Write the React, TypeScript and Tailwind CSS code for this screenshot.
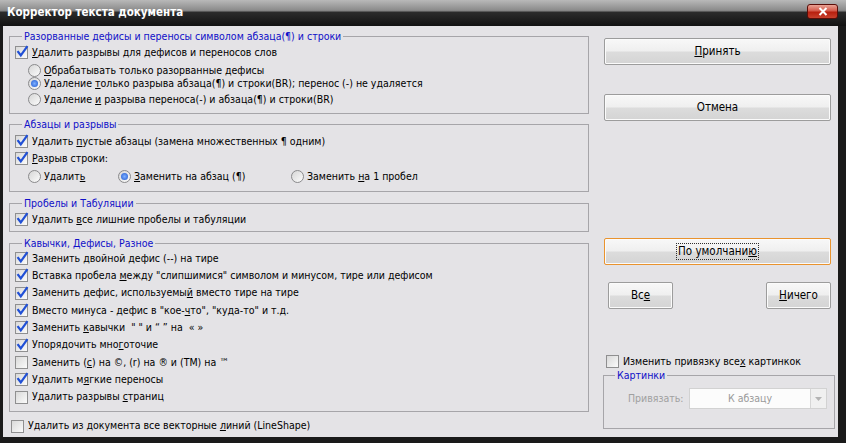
import React from 'react';

function Check({ on }: { on?: boolean }) {
  return (
    <span className="relative block w-[13px] h-[13px] shrink-0 border border-[#8f8f90] bg-linear-to-br from-[#d9d9d9] to-[#fbfbfb]">
      {on && (
        <svg className="absolute left-[0px] top-[-2px]" width="13" height="13" viewBox="0 0 13 13">
          <path d="M2.2 7 L4.8 10.4 L10.8 2" stroke="#2150d6" strokeWidth="2.2" fill="none" strokeLinecap="square" />
        </svg>
      )}
    </span>
  );
}

function Radio({ on }: { on?: boolean }) {
  return (
    <span className="relative flex items-center justify-center w-[13px] h-[13px] shrink-0 rounded-full border border-[#8a8a8c] bg-linear-to-br from-[#d6d6d6] to-[#fcfcfc]">
      {on && <span className="block w-[7px] h-[7px] rounded-full bg-radial from-[#7fb0ff] to-[#1d55cf]" />}
    </span>
  );
}

function CheckRow({ on, children, h = 'h-[17px]' }: { on?: boolean; children: React.ReactNode; h?: string }) {
  return (
    <div className={`flex items-center ${h}`}>
      <Check on={on} />
      <span className="ml-[4px] whitespace-nowrap">{children}</span>
    </div>
  );
}

function RadioRow({ on, children }: { on?: boolean; children: React.ReactNode }) {
  return (
    <div className="flex items-center">
      <Radio on={on} />
      <span className="ml-[3px] whitespace-nowrap">{children}</span>
    </div>
  );
}

function Legend({ children }: { children: React.ReactNode }) {
  return <legend className="ml-[7px] px-[2px] leading-[14px] text-[#1010c8]">{children}</legend>;
}

const btn =
  'flex items-center justify-center h-[27px] rounded-[2px] border border-[#9c9c9c] bg-[linear-gradient(#f8f8f8_0%,#efefef_48%,#dcdcdc_52%,#d4d4d4_100%)] shadow-[inset_0_0_0_1px_#fbfbfb] text-[11.5px]';

export default function App() {
  return (
    <div className="w-[846px] h-[443px] bg-[#1a1a1a] flex flex-col overflow-hidden font-['DejaVu_Sans_Condensed','Liberation_Sans',sans-serif] text-[10.5px] text-black">
      {/* title bar */}
      <div className="relative h-[26px] shrink-0 flex items-center pl-[7px] bg-[linear-gradient(#b9b9b9_0%,#8a8a8a_40%,#2b2b2b_48%,#121212_100%)]">
        <span className="text-white font-bold text-[11.5px]">Корректор текста документа</span>
        <div className="absolute left-[807px] top-[4px] w-[31px] h-[15px] rounded-[3px] border border-[#5a0d08] bg-[linear-gradient(#e9a294_0%,#d4594a_45%,#b8200f_55%,#c8402c_100%)] flex items-center justify-center">
          <svg width="10" height="9" viewBox="0 0 10 9">
            <path d="M1.5 1 L8.5 8 M8.5 1 L1.5 8" stroke="white" strokeWidth="2" />
          </svg>
        </div>
      </div>

      {/* client area */}
      <div className="flex-1 ml-[3px] mr-[8px] mb-[6px] bg-[#e4e3e6] flex">
        {/* left column */}
        <div className="ml-[6px] w-[580px] flex flex-col">
          <fieldset className="mt-[3px] border border-[#a6a5a9] pl-[5px] pb-[7px]">
            <Legend>Разорванные дефисы и переносы символом абзаца(¶) и строки</Legend>
            <div className="mt-[3px]">
              <CheckRow on h="h-[13px]">
                <u>У</u>далить разрывы для дефисов и переносов слов
              </CheckRow>
            </div>
            <div className="pl-[13px] flex flex-col">
              <div className="mt-[5px] h-[13px] flex items-center">
                <RadioRow>
                  <u>О</u>брабатывать только разорванные дефисы
                </RadioRow>
              </div>
              <div className="mt-[0px] h-[13px] flex items-center">
                <RadioRow on>
                  Удаление <u>т</u>олько разрыва абзаца(¶) и строки(BR); перенос (-) не удаляется
                </RadioRow>
              </div>
              <div className="mt-[3px] h-[13px] flex items-center">
                <RadioRow>
                  Удаление <u>и</u> разрыва переноса(-) и абзаца(¶) и строки(BR)
                </RadioRow>
              </div>
            </div>
          </fieldset>

          <fieldset className="mt-[3px] border border-[#a6a5a9] pl-[5px] pb-[6px]">
            <Legend>Абзацы и разрывы</Legend>
            <div className="mt-[2px]">
              <CheckRow on>
                Удалить <u>п</u>устые абзацы (замена множественных ¶ одним)
              </CheckRow>
              <CheckRow on>
                <u>Р</u>азрыв строки:
              </CheckRow>
              <div className="mt-[1px] h-[17px] flex items-center pl-[13px]">
                <div className="w-[90px]">
                  <RadioRow>
                    Удалит<u>ь</u>
                  </RadioRow>
                </div>
                <div className="w-[173px]">
                  <RadioRow on>
                    <u>З</u>аменить на абзац (¶)
                  </RadioRow>
                </div>
                <RadioRow>
                  Заменить <u>н</u>а 1 пробел
                </RadioRow>
              </div>
            </div>
          </fieldset>

          <fieldset className="mt-[4px] border border-[#a6a5a9] pl-[5px] pb-[3px]">
            <Legend>Пробелы и Табуляции</Legend>
            <div className="mt-[1px]">
              <CheckRow on h="h-[17px]">
                Удалить <u>в</u>се лишние пробелы и табуляции
              </CheckRow>
            </div>
          </fieldset>

          <fieldset className="mt-[4px] border border-[#a6a5a9] pl-[5px] pb-[5px]">
            <Legend>Кавычки, Дефисы, Разное</Legend>
            <div className="mt-[0px] flex flex-col">
              <CheckRow on h="h-[17.3px]">
                Заменить <u>д</u>войной дефис (--) на тире
              </CheckRow>
              <CheckRow on h="h-[17.3px]">
                Вставка пробела <u>м</u>ежду "слипшимися" символом и минусом, тире или дефисом
              </CheckRow>
              <CheckRow on h="h-[17.3px]">
                Заменить дефис, используемы<u>й</u> вместо тире на тире
              </CheckRow>
              <CheckRow on h="h-[17.3px]">
                Вместо минуса - дефис в "кое-<u>ч</u>то", "куда-то" и т.д.
              </CheckRow>
              <CheckRow on h="h-[17.3px]">
                Заменить <u>к</u>авычки&nbsp; " " и “ ” на&nbsp; « »
              </CheckRow>
              <CheckRow on h="h-[17.3px]">
                Упорядочить мно<u>г</u>оточие
              </CheckRow>
              <CheckRow h="h-[17.3px]">
                Заменить (<u>c</u>) на ©, (r) на ® и (TM) на ™
              </CheckRow>
              <CheckRow on h="h-[17.3px]">
                Удалить м<u>я</u>гкие переносы
              </CheckRow>
              <CheckRow h="h-[17.3px]">
                Удалить разрывы <u>с</u>траниц
              </CheckRow>
            </div>
          </fieldset>

          <div className="mt-[6px] ml-[2px]">
            <CheckRow h="h-[17px]">
              Удалить из документа все векторные <u>л</u>иний (LineShape)
            </CheckRow>
          </div>
        </div>

        {/* right column */}
        <div className="ml-[14px] w-[232px] flex flex-col">
          <div className={`${btn} mt-[12px] ml-[1px] w-[227px]`}>
            <span>
              <u>П</u>ринять
            </span>
          </div>
          <div className={`${btn} mt-[29px] ml-[1px] w-[227px]`}>
            <span>Отмена</span>
          </div>
          <div
            className={`${btn} mt-[117px] ml-[1px] w-[227px] border-[#e9932e] shadow-[inset_0_0_0_1px_#fbd9a6]`}
          >
            <span className="border border-dotted border-[#303030] px-[1px] leading-[15px]">
              По умолчани<u>ю</u>
            </span>
          </div>
          <div className="mt-[17px] ml-[5px] w-[223px] flex justify-between">
            <div className={`${btn} w-[65px] h-[26px]`}>
              <span>
                Вс<u>е</u>
              </span>
            </div>
            <div className={`${btn} w-[65px] h-[26px]`}>
              <span>
                <u>Н</u>ичего
              </span>
            </div>
          </div>

          <div className="mt-[45px] ml-[3px]">
            <CheckRow h="h-[15px]">
              Изменить привязку все<u>х</u> картинкок
            </CheckRow>
          </div>
          <fieldset className="mt-[-1px] border border-[#a6a5a9] pl-[4px] pb-[19px] w-[232px]">
            <Legend>Картинки</Legend>
            <div className="mt-[6px] ml-[20px] flex items-center">
              <span className="text-[#a0a0a0] w-[61px]">Привязать:</span>
              <div className="w-[138px] h-[21px] border border-[#d2d2d2] bg-[#fcfcfc] flex">
                <div className="flex-1 flex items-center justify-center text-[#9a9a9a]">К абзацу</div>
                <div className="w-[16px] border-l border-[#d6d6d6] bg-[#f0f0f0] flex items-center justify-center">
                  <svg width="7" height="4" viewBox="0 0 7 4">
                    <path d="M0 0 H7 L3.5 4 Z" fill="#b4b4b4" />
                  </svg>
                </div>
              </div>
            </div>
          </fieldset>
        </div>
      </div>
    </div>
  );
}
